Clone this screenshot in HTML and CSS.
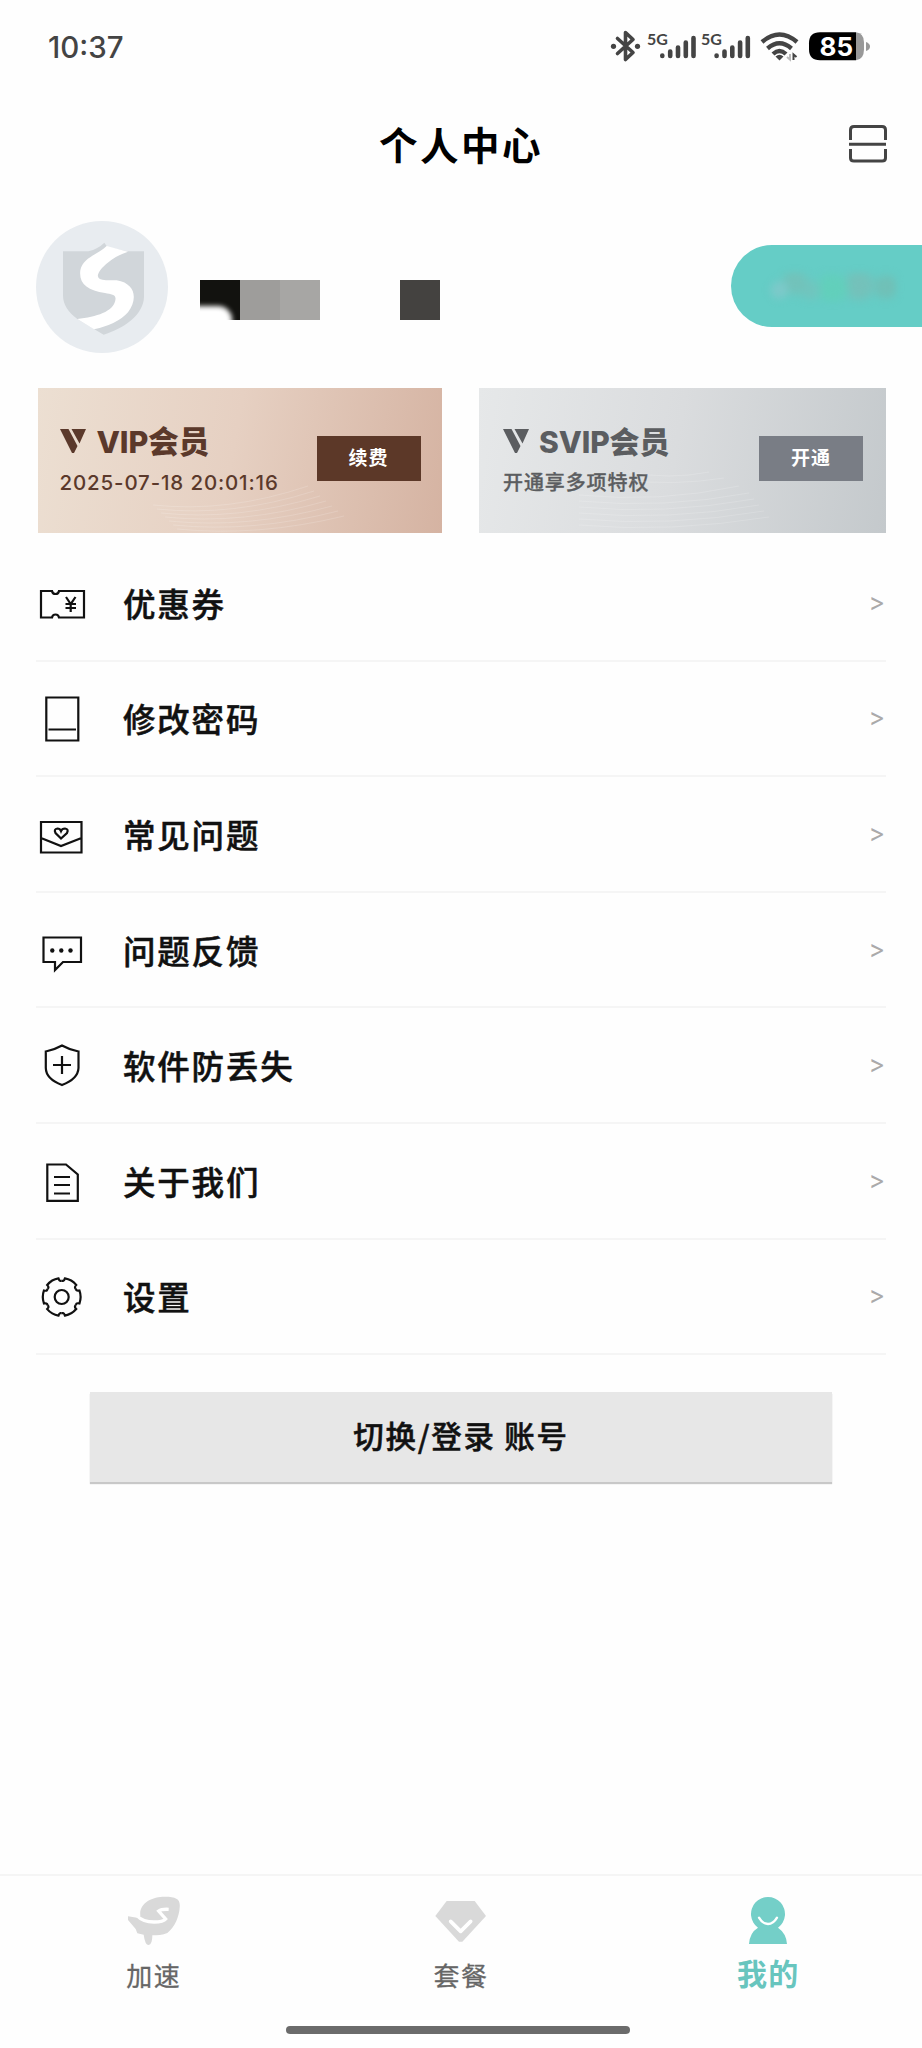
FILE: index.html
```html
<!DOCTYPE html>
<html lang="zh-CN">
<head>
<meta charset="utf-8">
<title>个人中心</title>
<link rel="stylesheet" href="styles.css">
</head>
<body>
<div class="screen">
  <header class="status">
    <span class="time">10:37</span>
    <svg class="status-icons" viewBox="605 25 270 40">
      <g fill="none" stroke="#444" stroke-width="3.6" stroke-linejoin="round" stroke-linecap="round">
        <path d="M617.5 38.500L633 52.500L625.500 59.500V32.500L633 39.500L617.500 53.500"/>
      </g>
      <g fill="#444">
        <circle cx="613.500" cy="46.300" r="2.600"/><circle cx="637.500" cy="46.300" r="2.600"/>
        <text class="net" x="647" y="44.500">5G</text>
        <text class="net" x="701" y="44.500">5G</text>
      </g>
      <g id="bars" stroke="#444" stroke-width="4.600" stroke-linecap="round" fill="none">
        <path d="M662.300 56V55.500M670.200 56V51.500M678 56V47.500M685.800 56V42.500M693.500 56V38"/>
      </g>
      <use href="#bars" x="54.300"/>
      <g fill="none" stroke="#444" stroke-width="4.400">
        <path d="M762 42Q779.500 27 797 42M767.500 48.500Q779.500 38 791.500 48.500M773 54Q779.500 48 786 54"/>
      </g>
      <path d="M775.500 56.500Q779.500 53 783.500 56.500L779.500 60.500Z" fill="#444"/>
      <path d="M790 54v5.500l-3-2.500" stroke="#bbb" stroke-width="2" fill="none"/>
      <path d="M793.500 60v-5.500l3 2.500" stroke="#444" stroke-width="2" fill="none"/>
      <path d="M856 32.300q8 1 8 10v7q0 10-8 11z" fill="#999"/>
      <path d="M856 32.300H820q-11 0-11 11v6q0 11 11 11h36z" fill="#000"/>
      <path d="M866 42q4 1.500 4 4.500t-4 4.500z" fill="#999"/>
      <text class="battery" x="819.500" y="55.500">85</text>
    </svg>
  </header>

  <div class="titlebar">
    <h1 class="title">个人中心</h1>
    <svg class="scan" viewBox="0 0 38 38" fill="none" stroke="#444" stroke-width="3">
      <path d="M1.500 15V5Q1.500 1.500 5 1.500H33Q36.500 1.500 36.500 5V15M0 19.200H37M1.500 24V33Q1.500 36 5 36H33Q36.500 36 36.500 33V24"/>
    </svg>
  </div>

  <section class="profile">
    <svg class="avatar" viewBox="108 62 396 396">
      <circle cx="306" cy="260" r="198" fill="#e8ecf0"/>
      <path d="M189 153H265Q295 145 313 127L322 140L380 153H432V290C430 345 370 385 311 403L282 386L232 356Q189 325 189 285Z" fill="#d1d6da"/>
      <path d="M320 137L384 154Q340 168 306 203Q276 238 318 240H350C410 250 412 300 384 336Q352 372 282 387L232 356C290 350 340 334 346 300C350 282 335 282 315 278C262 270 236 250 241 210C248 172 290 165 320 137Z" fill="#fff"/>
    </svg>
    <div class="mask">
      <i class="tile tile-a"></i><i class="tile tile-b"></i><i class="tile tile-c"></i><i class="tile tile-d"></i>
    </div>
    <div class="pill"><span class="smudge"></span></div>
  </section>

  <section class="cards">
    <div class="card vip">
      <svg class="waves" viewBox="0 0 404 145" fill="none" stroke="#fff" stroke-opacity=".16" stroke-width="1">
        <path d="M115 117Q190 125 270 98M119 121Q195 129 276 103M123 125Q200 133 282 108M127 129Q205 137 288 113M131 133Q210 141 294 118M135 137Q215 145 300 123M139 141Q220 149 306 128"/>
      </svg>
      <div class="info">
        <div class="plan"><svg class="vmark" viewBox="0 0 26 24" fill="currentColor"><path d="M0 0H8.500L17.500 17L14 24H12ZM11.500 0H26L19.500 14.500Z"/></svg><span>VIP会员</span></div>
        <div class="date">2025-07-18 20:01:16</div>
      </div>
      <div class="action">续费</div>
    </div>
    <div class="card svip">
      <svg class="waves" viewBox="0 0 407 145" fill="none" stroke="#fff" stroke-opacity=".16" stroke-width="1">
        <path d="M150 84Q190 92 230 84M145 92Q195 98 245 90M100 107Q180 115 260 98M100 113Q185 121 270 105M100 119Q185 127 275 111M100 125Q190 133 280 117M100 131Q190 139 285 123M100 137Q190 145 290 129"/>
      </svg>
      <div class="info">
        <div class="plan"><svg class="vmark" viewBox="0 0 26 24" fill="currentColor"><path d="M0 0H8.500L17.500 17L14 24H12ZM11.500 0H26L19.500 14.500Z"/></svg><span>SVIP会员</span></div>
        <div class="perk">开通享多项特权</div>
      </div>
      <div class="action">开通</div>
    </div>
  </section>

  <nav class="menu">
    <a class="row">
      <svg class="icon" viewBox="37 578 50 50"><path d="M41 591H52Q52.500 594 55.500 594T59 591H84V617.500H59Q58.500 614.500 55.500 614.500T52 617.500H41Z"/><path d="M66 597L70.700 604L75.500 597M70.700 604V612M65.500 604H76M65.500 608H76"/></svg>
      <span class="label">优惠券</span><span class="arrow">&gt;</span>
    </a>
    <a class="row">
      <svg class="icon" viewBox="37 693.500 50 50"><path d="M46.300 698H78.300V741H46.300ZM48.500 730H76"/></svg>
      <span class="label">修改密码</span><span class="arrow">&gt;</span>
    </a>
    <a class="row">
      <svg class="icon" viewBox="37 809 50 50"><path d="M41 822H81.500V852.500H41ZM41 838L61 846L81.500 838"/><path d="M61 838.500L55.500 833Q53.500 829 57.500 828.500Q60 828.500 61 831Q62 828.500 65 828.500Q69 829 67 833Z"/></svg>
      <span class="label">常见问题</span><span class="arrow">&gt;</span>
    </a>
    <a class="row">
      <svg class="icon" viewBox="37 924.500 50 50"><path d="M43.500 937H81V961.500H63L55 969.500V961.500H43.500Z"/><g class="solid"><circle cx="52.300" cy="950" r="2.200"/><circle cx="61.300" cy="950" r="2.200"/><circle cx="70.500" cy="950" r="2.200"/></g></svg>
      <span class="label">问题反馈</span><span class="arrow">&gt;</span>
    </a>
    <a class="row">
      <svg class="icon" viewBox="37 1040 50 50"><path d="M62 1045.500Q69 1049.500 78.500 1051.500V1068Q78 1079 62 1085Q46 1079 45.800 1068V1051.500Q55 1049.500 62 1045.500ZM53 1065H71M62 1056V1074"/></svg>
      <span class="label">软件防丢失</span><span class="arrow">&gt;</span>
    </a>
    <a class="row">
      <svg class="icon" viewBox="37 1155.500 50 50"><path d="M47.300 1164H66L77.800 1174V1200.300H47.300ZM54 1176.500H70M54 1184.500H70M54 1193H70"/></svg>
      <span class="label">关于我们</span><span class="arrow">&gt;</span>
    </a>
    <a class="row">
      <svg class="icon" viewBox="-24.700 -26 50 50"><path id="lobe" d="M0 -16.200H1.600Q2.600 -16.500 3.200 -18.600A19 19 0 0 1 14.500 -12.100Q12.800 -10.300 13.200 -9.400L14 -8.100"/><use href="#lobe" transform="rotate(60)"/><use href="#lobe" transform="rotate(120)"/><use href="#lobe" transform="rotate(180)"/><use href="#lobe" transform="rotate(240)"/><use href="#lobe" transform="rotate(300)"/><circle r="7"/></svg>
      <span class="label">设置</span><span class="arrow">&gt;</span>
    </a>
  </nav>

  <button class="switch">切换/登录 账号</button>

  <footer class="tabs">
    <a class="tab">
      <svg class="tab-icon" viewBox="144 108 156 150"><path d="M181 168C176 130 215 110 255 110C290 110 302 118 299 143C297 170 285 200 262 219C248 226 232 225 217 226Q217 254 206 255Q195 255 191 224L172 220L167 207L144 180V169L171 173Z" fill="#d9d9d9"/><path d="M172 168Q188 186 222 186Q250 186 257 177L236 153Q244 147 266 148" fill="none" stroke="#fff" stroke-width="10"/></svg>
      <span>加速</span>
    </a>
    <a class="tab">
      <svg class="tab-icon" viewBox="1068 108 156 150"><path d="M1103 123H1187L1221 168L1150 245H1140L1069 168Z" fill="#d9d9d9"/><path d="M1115 184L1145 214L1175 184" fill="none" stroke="#fff" stroke-width="11" stroke-linecap="round" stroke-linejoin="round"/></svg>
      <span>套餐</span>
    </a>
    <a class="tab active">
      <svg class="tab-icon" viewBox="783 108 156 150"><path d="M831 203A51 51 0 1 1 891 203Q916 220 918 252H804Q806 218 831 203Z" fill="#74cfc8"/><path d="M834 173Q845 192 861 192Q877 192 888 173" fill="none" stroke="#fff" stroke-width="7" stroke-linecap="round"/></svg>
      <span>我的</span>
    </a>
  </footer>
  <div class="home"></div>
</div>
</body>
</html>
```
FILE: styles.css
```css
* { box-sizing: border-box; }
body {
  margin: 0;
  background: #fefefe;
  color: #111;
  font-family: Inter, "Noto Sans CJK SC", sans-serif;
}
.screen {
  width: 922px;
  height: 2048px;
  display: flex;
  flex-direction: column;
}
.status {
  height: 94px;
  padding: 0 47px 0 48px;
  display: flex;
  align-items: center;
  justify-content: space-between;
}
.time { font-size: 29.5px; font-weight: 500; color: #444; line-height: 40px; }
.status-icons { width: 270px; height: 40px; margin-top: -4px; }
.net { font: 700 16px Lato, sans-serif; }
.battery { font: 700 26px Inter, sans-serif; fill: #fff; }
.titlebar {
  height: 102px;
  padding: 0 35px;
  display: grid;
  grid-template-columns: 38px 1fr 38px;
  align-items: center;
}
.title {
  grid-column: 2;
  margin: -4px 0 0;
  text-align: center;
  font: 600 38.5px/56px "Noto Sans CJK SC", sans-serif;
  letter-spacing: 2.5px;
  color: #000;
}
.scan { width: 38px; height: 38px; margin-top: -2px; }
.profile {
  height: 192px;
  padding: 25px 0 0 36px;
  display: flex;
  align-items: flex-start;
}
.avatar { width: 132px; height: 132px; }
.mask { display: flex; margin: 59px 0 0 32px; }
.tile { width: 40px; height: 40px; }
.tile-a { background: #12120f; overflow: hidden; }
.tile-a::before {
  content: "";
  display: block;
  width: 52px;
  height: 36px;
  margin: 26px 0 0 -20px;
  border-radius: 0 14px 0 0;
  background: #fff;
  filter: blur(2.5px);
}
.tile-b { background: #9e9d9b; }
.tile-c { background: #a7a6a4; }
.tile-d { background: #444240; margin-left: 80px; }
.pill {
  width: 191px;
  height: 82px;
  margin: 24px 0 0 auto;
  padding: 27px 0 0 26px;
  border-radius: 41px 0 0 41px;
  background: #65cdc6;
}
.smudge {
  display: block;
  width: 140px;
  height: 30px;
  filter: blur(3px);
  background:
    radial-gradient(circle at 16% 60%, #7cc9c9 0 5px, transparent 12px),
    radial-gradient(circle at 27% 35%, #72c2ba 0 7px, transparent 17px),
    radial-gradient(circle at 38% 60%, #70c5be 0 5px, transparent 14px),
    radial-gradient(circle at 54% 55%, #62cfbb 0 9px, transparent 20px),
    radial-gradient(circle at 73% 45%, #74c1ba 0 9px, transparent 20px),
    radial-gradient(circle at 92% 50%, #70c0b7 0 7px, transparent 16px);
}
.cards {
  padding: 0 36px 0 37.5px;
  display: grid;
  grid-template-columns: 404px 407px;
  justify-content: space-between;
}
.card {
  position: relative;
  height: 145px;
  padding: 0 21px 0 22px;
  display: flex;
  justify-content: space-between;
}
.vip { background: linear-gradient(100deg, #ecdfd2, #e6d0c2 48%, #d5b3a2); color: #5b392b; }
.svip { background: linear-gradient(100deg, #e6e8e9, #dadcde 48%, #c4c9cc); color: #5b5d60; padding-left: 24px; padding-right: 23px; }
.waves { position: absolute; inset: 0; width: 100%; height: 100%; }
.info { padding-top: 31px; }
.plan {
  display: flex;
  align-items: center;
  gap: 11px;
  height: 42px;
  font-size: 30.5px;
  font-weight: 800;
  letter-spacing: -.1px;
}
.svip .plan { font-size: 30px; gap: 10px; }
.vmark { width: 26px; height: 24px; margin-top: 2px; }
.date, .perk { height: 30px; margin-top: 7px; line-height: 30px; white-space: nowrap; }
.date { font-size: 20.5px; font-weight: 500; letter-spacing: .85px; }
.perk { font-size: 20px; font-weight: 500; letter-spacing: .9px; -webkit-text-stroke: .3px currentColor; }
.action {
  width: 104px;
  height: 45px;
  margin-top: 48px;
  text-align: center;
  font-size: 19px;
  font-weight: 700;
  letter-spacing: 1px;
  line-height: 45px;
  color: #fff;
  background: #5c3828;
}
.svip .action { background: #797d85; }
.menu { padding: 13px 36px 0; }
.row {
  height: 115.6px;
  display: flex;
  align-items: center;
  border-bottom: 2px solid #f5f5f5;
}
.icon {
  width: 50px;
  height: 50px;
  margin-left: 1px;
  fill: none;
  stroke: #111;
  stroke-width: 2.2;
}
.solid { fill: #111; stroke: none; }
.label {
  flex: 1;
  margin-left: 36px;
  font: 500 32.5px/48px "Noto Sans CJK SC", sans-serif;
  letter-spacing: 1.8px;
  -webkit-text-stroke: .5px currentColor;
}
.arrow { margin: -2px 1px 0 0; font-size: 25px; color: #aaa; }
.switch {
  width: 742px;
  height: 90px;
  margin: 37px auto 0 90px;
  border: 0;
  background: #e7e7e7;
  box-shadow: 0 2px 1px #c8c8c8;
  color: #111;
  font: 500 30.5px/86px "Noto Sans CJK SC", sans-serif;
  letter-spacing: 1.7px;
  padding: 0 0 4px;
  -webkit-text-stroke: .5px currentColor;
}
.tabs {
  height: 152px;
  margin-top: auto;
  padding-top: 20px;
  border-top: 2px solid #f5f5f5;
  display: grid;
  grid-template-columns: repeat(3, 1fr);
}
.tab {
  display: flex;
  flex-direction: column;
  align-items: center;
  font: 400 26px/40px "Noto Sans CJK SC", sans-serif;
  letter-spacing: 1.4px;
  color: #666;
  -webkit-text-stroke: .3px currentColor;
}
.tab-icon { width: 52px; height: 50px; margin-bottom: 9px; }
.active { color: #68c5be; font-weight: 700; font-size: 30px; line-height: 36px; -webkit-text-stroke: 0; }
.active .tab-icon { margin-bottom: 8px; }
.home {
  width: 344px;
  height: 8px;
  margin: 0 auto 14px 286px;
  border-radius: 4px;
  background: #6b6b6b;
}
```
